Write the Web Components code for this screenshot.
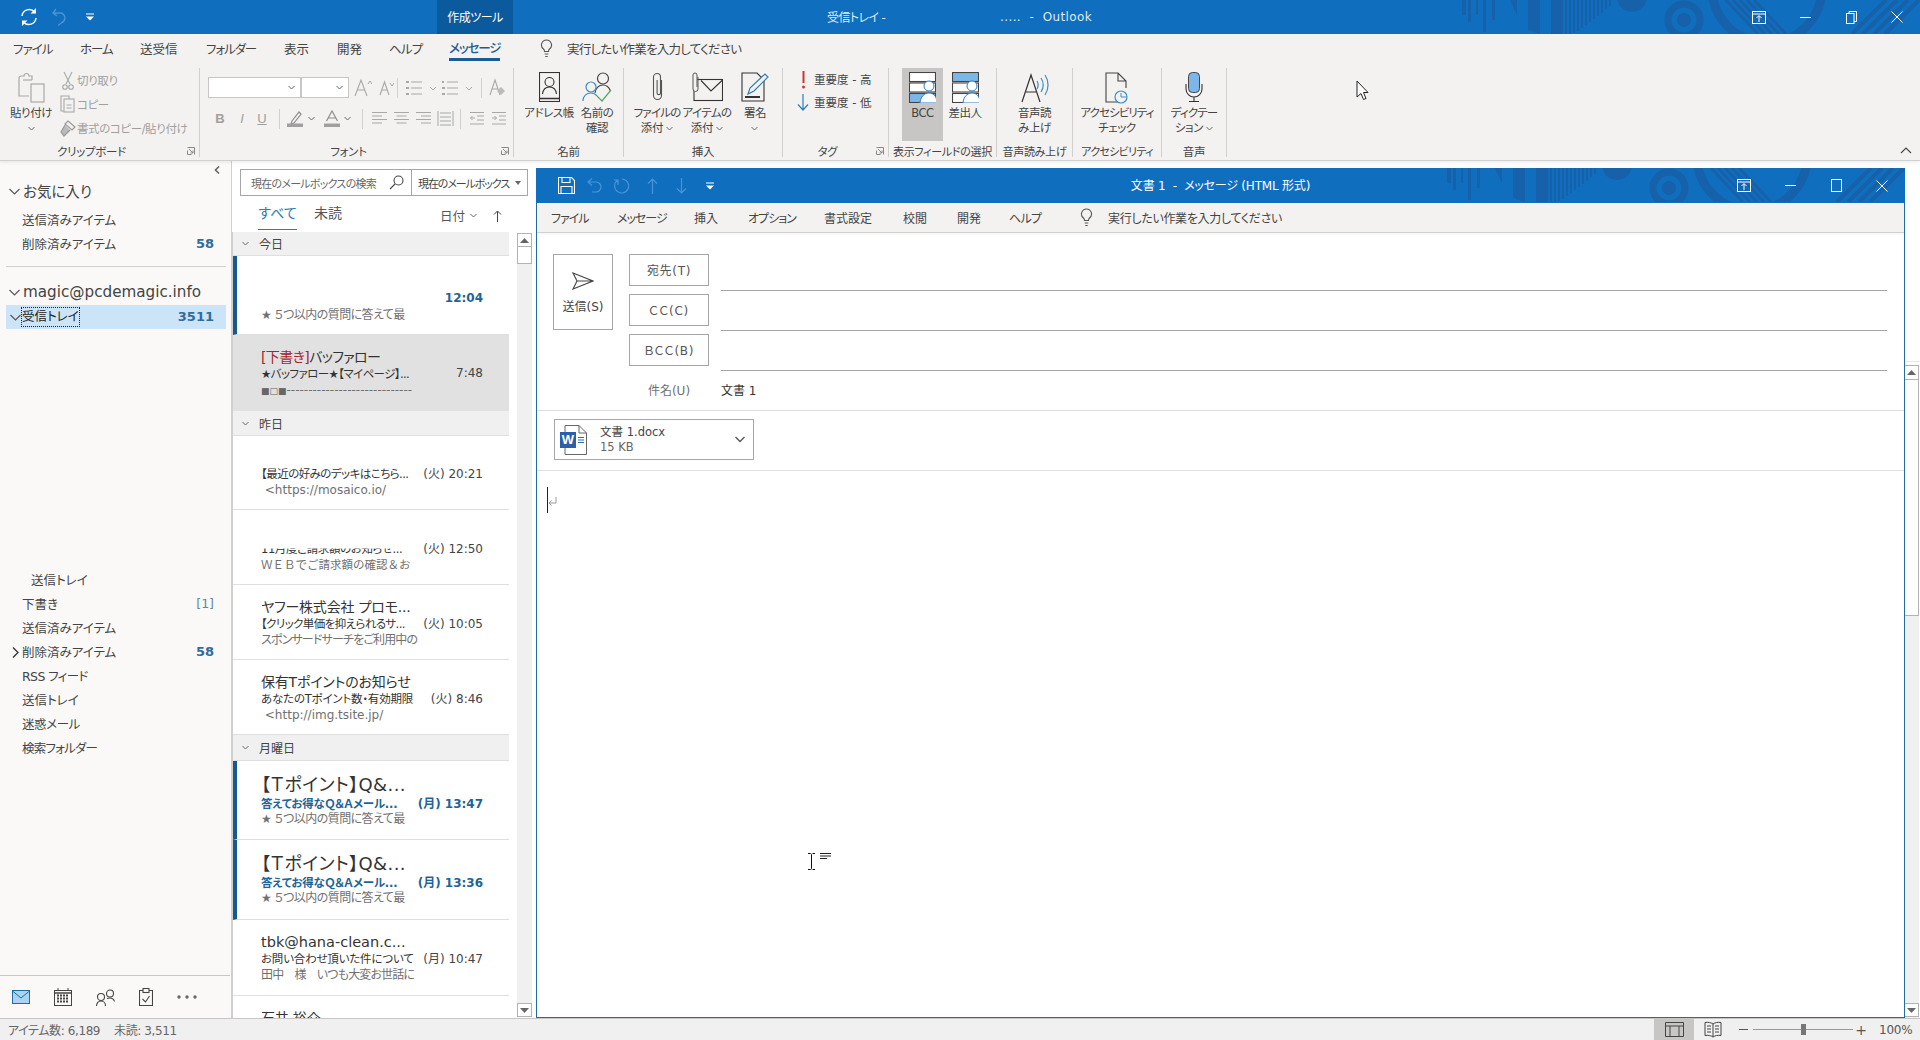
<!DOCTYPE html>
<html lang="ja"><head><meta charset="utf-8"><title>Outlook</title>
<style>
html,body{margin:0;padding:0;height:100%;overflow:hidden;background:#fff}
body{font-family:"DejaVu Sans","Noto Sans CJK JP",sans-serif;font-feature-settings:"palt";color:#444;font-size:12px}
</style></head><body>
<o-app>
 <o-titlebar>
  <o-ico n="refresh" slot="a"></o-ico><o-ico n="undo" slot="b"></o-ico><o-ico n="qdrop" slot="c"></o-ico>
 </o-titlebar>
 <o-tabs>
  <o-tab w="67" ls="-.9">ファイル</o-tab><o-tab w="60" ls="-1.1">ホーム</o-tab><o-tab w="66">送受信</o-tab><o-tab w="78" ls="-1.1">フォルダー</o-tab><o-tab w="53">表示</o-tab><o-tab w="52">開発</o-tab><o-tab w="60" ls="-.8">ヘルプ</o-tab><o-tab w="91" ls="-1.100" active>メッセージ</o-tab>
  <o-tab w="27"><o-ico n="bulb"></o-ico></o-tab><o-tab w="200" ls="-.75">実行したい作業を入力してください</o-tab>
 </o-tabs>
 <o-ribbon>
  <rb-group w="200" label="クリップボード" launcher>
   <rb-bar pl="10" align="start">
    <rb-btn w="42"><o-ico n="paste" slot="icon"></o-ico>貼り付け<br><o-ico n="chev"></o-ico></rb-btn>
    <rb-col ml="8">
     <rb-line off><o-ico n="scissors" style="width:16px;justify-content:center"></o-ico>切り取り</rb-line>
     <rb-line off><o-ico n="copy" style="width:16px;justify-content:flex-start"></o-ico>コピー</rb-line>
     <rb-line off><o-ico n="brush" style="width:16px;justify-content:flex-start;margin-left:-1px;margin-right:1px"></o-ico>書式のコピー/貼り付け</rb-line>
    </rb-col>
   </rb-bar>
  </rb-group>
  <rb-group w="314" label="フォント" launcher>
   <rb-col pl="8" pt="9" gap="10">
    <rb-bar>
     <rb-tool w="93" box><o-ico n="chev"></o-ico></rb-tool><rb-tool w="48" box><o-ico n="chev"></o-ico></rb-tool>
     <rb-tool w="24" ml="2"><o-ico n="agrow"></o-ico></rb-tool><rb-tool w="22"><o-ico n="ashrink"></o-ico></rb-tool><rb-tool w="1" sep></rb-tool>
     <rb-tool w="32" ml="6"><o-ico n="bullets"></o-ico></rb-tool><rb-tool w="31" ml="5"><o-ico n="numbers"></o-ico></rb-tool><rb-tool w="1" ml="9" sep></rb-tool>
     <rb-tool w="17" ml="7"><o-ico n="clear"></o-ico></rb-tool>
    </rb-bar>
    <rb-bar>
     <rb-tool w="24" b>B</rb-tool><rb-tool w="20" i>I</rb-tool><rb-tool w="20" u>U</rb-tool><rb-tool w="1" ml="7" sep></rb-tool>
     <rb-tool w="16" ml="7"><o-ico n="hilite"></o-ico></rb-tool><rb-tool w="16"><o-ico n="chev"></o-ico></rb-tool>
     <rb-tool w="17" ml="4"><o-ico n="fontcolor"></o-ico></rb-tool><rb-tool w="14"><o-ico n="chev"></o-ico></rb-tool><rb-tool w="1" ml="8" sep></rb-tool>
     <rb-tool w="17" ml="8"><o-ico n="al"></o-ico></rb-tool><rb-tool w="17" ml="5"><o-ico n="ac"></o-ico></rb-tool><rb-tool w="17" ml="5"><o-ico n="ar"></o-ico></rb-tool><rb-tool w="17" ml="5"><o-ico n="aj"></o-ico></rb-tool><rb-tool w="1" ml="6" sep></rb-tool>
     <rb-tool w="16" ml="8"><o-ico n="outdent"></o-ico></rb-tool><rb-tool w="16" ml="6"><o-ico n="indent"></o-ico></rb-tool>
    </rb-bar>
   </rb-col>
  </rb-group>
  <rb-group w="110" label="名前">
   <rb-bar pl="10" align="start">
    <rb-btn w="50"><o-ico n="addr" slot="icon"></o-ico>アドレス帳</rb-btn>
    <rb-btn w="44" ml="1"><o-ico n="names" slot="icon"></o-ico>名前の<br>確認</rb-btn>
   </rb-bar>
  </rb-group>
  <rb-group w="159" label="挿入">
   <rb-bar pl="8" align="start">
    <rb-btn w="50"><o-ico n="clip" slot="icon"></o-ico><span style="letter-spacing:-.8px">ファイルの</span><br>添付 <o-ico n="chev"></o-ico></rb-btn>
    <rb-btn w="50"><o-ico n="mailclip" slot="icon"></o-ico><span style="letter-spacing:-.6px">アイテムの</span><br>添付 <o-ico n="chev"></o-ico></rb-btn>
    <rb-btn w="46"><o-ico n="sign" slot="icon"></o-ico>署名<br><o-ico n="chev"></o-ico></rb-btn>
   </rb-bar>
  </rb-group>
  <rb-group w="106" label="タグ" launcher>
   <rb-col pl="14">
    <rb-line h="22"><o-ico n="high" style="width:12px;justify-content:center"></o-ico>重要度 - 高</rb-line>
    <rb-line h="23"><o-ico n="low"></o-ico>重要度 - 低</rb-line>
   </rb-col>
  </rb-group>
  <rb-group w="108" label="表示フィールドの選択" tight>
   <rb-bar pl="13" align="start">
    <rb-btn w="41" sel><o-ico n="bcc" slot="icon"></o-ico>BCC</rb-btn>
    <rb-btn w="44"><o-ico n="from" slot="icon"></o-ico>差出人</rb-btn>
   </rb-bar>
  </rb-group>
  <rb-group w="76" label="音声読み上げ" tight>
   <rb-bar align="start" center><rb-btn w="70"><o-ico n="read" slot="icon"></o-ico>音声読<br>み上げ</rb-btn></rb-bar>
  </rb-group>
  <rb-group w="89" label="アクセシビリティ" tight ls="-.7">
   <rb-bar align="start" center><rb-btn w="80"><o-ico n="access" slot="icon"></o-ico><span style="letter-spacing:-.95px">アクセシビリティ</span><br>チェック</rb-btn></rb-bar>
  </rb-group>
  <rb-group w="65" label="音声">
   <rb-bar align="start" center><rb-btn w="60"><o-ico n="mic" slot="icon"></o-ico><span style="letter-spacing:-.85px">ディクテー</span><br>ション <o-ico n="chev"></o-ico></rb-btn></rb-bar>
  </rb-group>
  <o-ico n="caret" slot="end"></o-ico>
 </o-ribbon>
 <o-main>
  <o-nav>
   <o-navhead big>お気に入り</o-navhead>
   <o-navitem mt="5">送信済みアイテム</o-navitem>
   <o-navitem count="58">削除済みアイテム</o-navitem>
   <o-navsep></o-navsep>
   <o-navhead mail>magic@pcdemagic.info</o-navhead>
   <o-navitem sel focus chev="down" count="3511">受信トレイ</o-navitem>
   <o-navitem mt="239" indent="9">送信トレイ</o-navitem>
   <o-navitem count="[1]" plain>下書き</o-navitem>
   <o-navitem>送信済みアイテム</o-navitem>
   <o-navitem chev="right" count="58">削除済みアイテム</o-navitem>
   <o-navitem ls="-.6">RSS フィード</o-navitem>
   <o-navitem>送信トレイ</o-navitem>
   <o-navitem ls="-.4">迷惑メール</o-navitem>
   <o-navitem ls="-.8">検索フォルダー</o-navitem>
   <o-ico n="nmail" slot="foot"></o-ico><o-ico n="ncal" slot="foot"></o-ico><o-ico n="npeople" slot="foot"></o-ico><o-ico n="ntask" slot="foot"></o-ico><o-ico n="ndots" slot="foot"></o-ico>
  </o-nav>
  <o-list>
   <o-sect h="24">今日</o-sect>
   <o-mail h="79" pad="18" unread><span slot="a">&nbsp;</span><span slot="b">&nbsp;</span><span slot="t">12:04</span><span slot="c">★ ５つ以内の質問に答えて最</span></o-mail>
   <o-mail h="76" pad="14" sel><span slot="a" style="letter-spacing:-.6px"><span style="color:#a4262c">[下書き]</span>バッファロー</span><span slot="b" style="letter-spacing:-.6px">★バッファロー★【マイページ】...</span><span slot="t">7:48</span><span slot="c" style="letter-spacing:0"><span style="font-size:9px;color:#666">■□■</span>-----------------------------</span></o-mail>
   <o-sect h="25">昨日</o-sect>
   <o-mail h="74" pad="13"><span slot="a">&nbsp;</span><span slot="b" style="letter-spacing:-.55px">【最近の好みのデッキはこちら...</span><span slot="t">(火) 20:21</span><span slot="c" style="letter-spacing:0">&nbsp;&lt;https://mosaico.io/</span></o-mail>
   <o-mail h="75" pad="14"><span slot="a">&nbsp;</span><span slot="b" style="clip-path:inset(7px 0 0 0);letter-spacing:-.4px">11月度ご請求額のお知らせ...</span><span slot="t">(火) 12:50</span><span slot="c" style="font-feature-settings:normal;font-size:11.5px;letter-spacing:0">ＷＥＢでご請求額の確認＆お</span></o-mail>
   <o-mail h="75" pad="14"><span slot="a">ヤフー株式会社 プロモ...</span><span slot="b" style="letter-spacing:-.6px">【クリック単価を抑えられるサ...</span><span slot="t">(火) 10:05</span><span slot="c" style="letter-spacing:-.85px">スポンサードサーチをご利用中の</span></o-mail>
   <o-mail h="75" pad="14"><span slot="a">保有Tポイントのお知らせ</span><span slot="b">あなたのTポイント数・有効期限</span><span slot="t">(火) 8:46</span><span slot="c" style="letter-spacing:0">&nbsp;&lt;http://img.tsite.jp/</span></o-mail>
   <o-sect h="26">月曜日</o-sect>
   <o-mail h="79" pad="14" unread big><span slot="a">【Ｔポイント】Q&amp;...</span><span slot="b">答えてお得なＱ＆Ａメール...</span><span slot="t">(月) 13:47</span><span slot="c">★ ５つ以内の質問に答えて最</span></o-mail>
   <o-mail h="80" pad="14" unread big><span slot="a">【Ｔポイント】Q&amp;...</span><span slot="b">答えてお得なＱ＆Ａメール...</span><span slot="t">(月) 13:36</span><span slot="c">★ ５つ以内の質問に答えて最</span></o-mail>
   <o-mail h="76" pad="14"><span slot="a" style="font-size:14.5px;letter-spacing:0">tbk@hana-clean.c...</span><span slot="b">お問い合わせ頂いた件について</span><span slot="t">(月) 10:47</span><span slot="c" style="letter-spacing:-.85px">田中　様　いつも大変お世話に</span></o-mail>
   <o-mail h="40" pad="14"><span slot="a">石井 裕介</span><span slot="b">&nbsp;</span><span slot="t"></span><span slot="c">&nbsp;</span></o-mail>
  </o-list>
  <o-compose></o-compose>
  <o-vscroll></o-vscroll>
 </o-main>
 <o-status></o-status>
</o-app>
<script>
const I={
refresh:[18,20,'<g fill="none" stroke="#fff" stroke-width="1.5"><path d="M2 9A7.2 7.2 0 0 1 14.6 5"/><path d="M16 11A7.2 7.2 0 0 1 3.4 15"/></g><path d="M16 1v5.5h-5.5z M2 19v-5.5h5.5z" fill="#fff"/>'],
undo:[15,18,'<path d="M4 1 1 5l4 3M1.500 5H8a5 5 0 0 1 2 9.500L6 17.500" fill="none" stroke="#4a94d6" stroke-width="1.400"/>'],
qdrop:[8,8,'<path d="M0 1h8" stroke="#fff"/><path d="M0 3.500h8L4 7.500z" fill="#fff"/>'],
bulb:[13,19,'<path d="M6.500 1a5 5 0 0 0-3 9c.7.6 1 1.400 1 2.500h4c0-1.100.3-1.900 1-2.500a5 5 0 0 0-3-9zM4.700 15h3.600M5.300 17.500h2.400" fill="none" stroke="#555" stroke-width="1.100"/>'],
chev:[7,5,'<path d="M.5 1 3.500 4 6.500 1" fill="none" stroke="#666" stroke-width="1"/>'],
paste:[27,31,'<g fill="none" stroke="#a8a8a8" stroke-width="1.200"><path d="M14 8V4h-3a2.500 2.500 0 0 0-5 0H3a2 2 0 0 0-2 2v18h10"/><path d="M5 8h9"/><rect x="13" y="12" width="13" height="18" fill="#f3f2f1"/></g>'],
scissors:[12,19,'<g fill="none" stroke="#a8a8a8" stroke-width="1.100"><path d="M2 1l6 12M10 1 4 13"/><circle cx="3" cy="16" r="2.300"/><circle cx="9" cy="16" r="2.300"/></g>'],
copy:[15,18,'<g fill="none" stroke="#a8a8a8" stroke-width="1.100"><path d="M5 16H1V1h8v3"/><rect x="4" y="4" width="10" height="13" fill="#f3f2f1"/><path d="M6.500 10h5M6.500 13h5"/></g>'],
brush:[17,17,'<g fill="none" stroke="#999" stroke-width="1.200"><path d="M9 1l7 6-3 3-7-6z"/><path d="M6 5 2 12l3 4 6-6" fill="#bbb"/></g>'],
agrow:[18,20,'<path d="M1 18 7 2l6 16M3.500 12h7" fill="none" stroke="#a8a8a8" stroke-width="1.100"/><path d="M14 6l2-3 2 3" fill="none" stroke="#a8a8a8"/>'],
ashrink:[15,16,'<path d="M1 15 5.500 2l4.500 13M3 10h5" fill="none" stroke="#a8a8a8" stroke-width="1.100"/><path d="M11 3l2 3 2-3" fill="none" stroke="#a8a8a8"/>'],
bullets:[31,16,'<g stroke="#a8a8a8"><path d="M1 2h3M1 8h3M1 14h3" stroke-width="2"/><path d="M6 2h11M6 8h11M6 14h11" stroke-width="1"/></g><path d="M25 7l3 3 3-3" fill="none" stroke="#a8a8a8"/>'],
numbers:[31,16,'<g stroke="#a8a8a8"><path d="M1 2h2M1 8h3M1 14h3" stroke-width="2"/><path d="M6 2h11M6 8h11M6 14h11" stroke-width="1"/></g><path d="M25 7l3 3 3-3" fill="none" stroke="#a8a8a8"/>'],
clear:[17,19,'<path d="M1 17 6 2l5 15M3 11h6" fill="none" stroke="#a8a8a8" stroke-width="1.100"/><path d="M12 9l4 4-4 4-4-4z" fill="#bbb"/>'],
hilite:[16,17,'<path d="M5 11l7-9 2 2-7 9-3 1z" fill="none" stroke="#8d8d8d" stroke-width="1.200"/><rect y="13.500" width="16" height="3.500" fill="#a0a0a0"/>'],
fontcolor:[16,17,'<path d="M2.500 11 8 1l5.500 10M4.500 8h7" fill="none" stroke="#8d8d8d" stroke-width="1.200"/><rect y="13.500" width="16" height="3.500" fill="#a0a0a0"/>'],
al:[17,15,'<path d="M1 1.500h15M1 5h10M1 8.500h15M1 12h10" stroke="#a8a8a8"/>'],
ac:[17,15,'<path d="M1 1.500h15M3.500 5h10M1 8.500h15M3.500 12h10" stroke="#a8a8a8"/>'],
ar:[17,15,'<path d="M1 1.500h15M6 5h10M1 8.500h15M6 12h10" stroke="#a8a8a8"/>'],
aj:[17,17,'<path d="M1 1v15M16 1v15M3 3h11M3 7h11M3 11h11M3 15h11" stroke="#a8a8a8" fill="none"/>'],
outdent:[16,15,'<path d="M1 1.500h14M8 5h7M8 9h7M1 13h14M6 7H1.500M3.500 5 1.500 7l2 2" stroke="#a8a8a8" fill="none"/>'],
indent:[16,15,'<path d="M1 1.500h14M8 5h7M8 9h7M1 13h14M1 7h4.500M3.500 5l2 2-2 2" stroke="#a8a8a8" fill="none"/>'],
addr:[21,30,'<g fill="none" stroke="#333" stroke-width="1.100"><rect x=".5" y=".5" width="20" height="29"/><circle cx="10.500" cy="10" r="4.500"/><path d="M3.500 22c.5-4.500 3.500-7 7-7s6.500 2.500 7 7"/></g><path d="M.5 26.500h20" stroke="#333" stroke-width="1.500"/>'],
names:[30,30,'<g fill="none" stroke-width="1.200"><g stroke="#444"><circle cx="21" cy="6.500" r="5.500"/><path d="M13 21c.5-5 4-8 8-8 3 0 6 2 7.500 6"/></g><g stroke="#3b8ec7"><circle cx="9" cy="15" r="5"/><path d="M1 29c0-5 3.500-8 8-8 2.500 0 4.500 1 6 3"/></g><path d="M15 24l5 5 9-11" stroke="#57a66a"/></g>'],
clip:[11,31,'<path d="M9.500 8v15.500a4 4 0 0 1-8 0V5a3.500 3.500 0 0 1 7 0v16a1.700 1.700 0 0 1-3.400 0V8" fill="none" stroke="#555" stroke-width="1.100"/>'],
mailclip:[32,31,'<g fill="none" stroke="#333" stroke-width="1.100"><rect x="3" y="7.500" width="28.500" height="21"/><path d="M10 8.500 20 19l11-10.500"/></g><path d="M7 5v12a2.500 2.500 0 0 1-5 0V3a2 2 0 0 1 4 0v12" fill="#f3f2f1" stroke="#555"/>'],
sign:[28,31,'<g fill="none"><path d="M1 1h15l7 7v21H1z" stroke="#333" stroke-width="1.100"/><path d="M4 25h15" stroke="#333" stroke-width="2"/><path d="M7 22l2-6L24 2l3 3-14 14z" fill="#f3f2f1" stroke="#2f7dbb" stroke-width="1.200"/></g>'],
high:[5,19,'<path d="M2.500 1v12" stroke="#d13438" stroke-width="2"/><circle cx="2.500" cy="17" r="1.500" fill="#d13438"/>'],
low:[12,18,'<path d="M6 1v16M1 11.500l5 5.500 5-5.500" fill="none" stroke="#2f7dbb" stroke-width="1.200"/>'],
bcc:[27,31,'<g stroke="#444" stroke-width="1.100"><rect x=".5" y=".5" width="26" height="9" fill="#fff"/><rect x=".5" y="11" width="26" height="9" fill="#fff"/><rect x=".5" y="21.500" width="26" height="9" fill="#7db7ea"/></g><circle cx="20" cy="14" r="5" fill="#fff" stroke="#2f7dbb"/><path d="M11 31c.5-6 4-10 9-10s8 4 8 10z" fill="#fff" stroke="#2f7dbb"/>'],
from:[27,31,'<g stroke="#444" stroke-width="1.100"><rect x=".5" y=".5" width="26" height="9" fill="#7db7ea"/><rect x=".5" y="11" width="26" height="9" fill="#fff"/><rect x=".5" y="21.500" width="26" height="9" fill="#fff"/></g><circle cx="20" cy="14" r="5" fill="#fff" stroke="#2f7dbb"/><path d="M11 31c.5-6 4-10 9-10s8 4 8 10z" fill="#fff" stroke="#2f7dbb"/>'],
read:[28,31,'<path d="M1 30 10 3l9 27M5 20h10" fill="none" stroke="#333" stroke-width="1.200"/><path d="M16 9a8 8 0 0 1 0 8M20 6a13 13 0 0 1 0 14M24 3a18 18 0 0 1 0 20" fill="none" stroke="#3b8ec7" stroke-width="1.200"/>'],
access:[27,32,'<path d="M16 30H2V1h12l8 8v7M14 1v8h8" fill="none" stroke="#444" stroke-width="1.100"/><circle cx="17" cy="25" r="6" fill="#f3f2f1" stroke="#3b8ec7" stroke-width="1.200"/><path d="M17 21v4h5" fill="none" stroke="#3b8ec7"/>'],
mic:[18,31,'<rect x="3.500" y=".5" width="11" height="20" rx="4" fill="#7db7ea" stroke="#444"/><path d="M1 12v5a8 8 0 0 0 16 0v-5M9 25v4M4 29.500h10" fill="none" stroke="#333" stroke-width="1.100"/>'],
caret:[12,7,'<path d="M1 6l5-5 5 5" fill="none" stroke="#444" stroke-width="1.100"/>'],
left:[6,8,'<path d="M5 .5 1.500 4 5 7.500" fill="none" stroke="#666" stroke-width="1.600"/>'],
navdown:[11,7,'<path d="M.5 1l5 5 5-5" fill="none" stroke="#555" stroke-width="1.100"/>'],
navright:[7,11,'<path d="M1 .5l5 5-5 5" fill="none" stroke="#333" stroke-width="1.300"/>'],
nmail:[18,14,'<rect x=".5" y=".5" width="17" height="13" fill="#a9d3f2" stroke="#1f6f9e"/><path d="M.5 1 9 8l8.500-7" fill="none" stroke="#1f6f9e"/>'],
ncal:[18,18,'<rect x=".5" y="2.500" width="17" height="15" fill="none" stroke="#444"/><path d="M.5 5h17" stroke="#444" stroke-width="1.500"/><path d="M3 7.500h12M3 10.500h12M3 13.500h12" stroke="#444" stroke-width="2" stroke-dasharray="2 1"/><path d="M4 0v3M14 0v3" stroke="#444"/>'],
npeople:[19,17,'<g fill="none" stroke="#444" stroke-width="1.100"><circle cx="14" cy="4.500" r="3.500"/><circle cx="5" cy="8" r="3.500"/><path d="M.5 17c0-3 2-5 4.500-5s4.500 2 4.500 5"/><path d="M11 9.500c3.500-1 6.500 0 7.500 3"/></g>'],
ntask:[14,18,'<g fill="none" stroke="#444" stroke-width="1.100"><path d="M4 2.500H.5v15h13v-15H10"/><rect x="4" y=".5" width="6" height="4"/><path d="M3.500 11l3 3 4-6"/></g>'],
ndots:[20,4,'<g fill="#666"><circle cx="2" cy="2" r="1.700"/><circle cx="10" cy="2" r="1.700"/><circle cx="18" cy="2" r="1.700"/></g>'],
search:[15,15,'<circle cx="9.500" cy="5.500" r="4.500" fill="none" stroke="#444" stroke-width="1.100"/><path d="M6 9 1 14" stroke="#444" stroke-width="1.100"/>'],
drop:[6,4,'<path d="M0 0h6L3 4z" fill="#666"/>'],
up:[9,12,'<path d="M4.500 12V1M1 4.500 4.500 1 8 4.500" fill="none" stroke="#444" stroke-width="1"/>'],
sbup:[9,5,'<path d="M0 5 4.500 0 9 5z" fill="#666"/>'],
sbdown:[9,5,'<path d="M0 0h9L4.500 5z" fill="#666"/>'],
win_ribbon:[14,13,'<rect x=".5" y=".5" width="13" height="12" fill="none" stroke="#fff"/><path d="M.5 3h13" stroke="#fff" stroke-width="1"/><path d="M7 11V5M4.500 7 7 4.500 9.500 7" fill="none" stroke="#fff"/>'],
win_min:[11,1,'<path d="M0 .5h11" stroke="#fff"/>'],
win_max:[11,13,'<rect x=".5" y=".5" width="10" height="12" fill="none" stroke="#fff"/>'],
win_res:[11,13,'<rect x=".5" y="2.500" width="7.500" height="10" fill="none" stroke="#fff"/><path d="M3 2.500V.5h7.500v10H8" fill="none" stroke="#fff"/>'],
win_close:[12,12,'<path d="M.5.5l11 11M11.500.5l-11 11" stroke="#fff" stroke-width="1"/>'],
save:[17,17,'<g fill="none" stroke="#fff" stroke-width="1.100"><path d="M.5.5h13l3 3v13H.5z"/><path d="M4 .5v5h8v-5M3 16.500v-7h11v7"/></g>'],
cundo:[15,15,'<path d="M5 .5 1 4l4 3.500M1.500 4H9a5 5 0 0 1 0 10H5" fill="none" stroke="#4a94d6" stroke-width="1.200"/>'],
credo:[16,16,'<path d="M4 2a7 7 0 1 0 4-1M4 7V2H0" fill="none" stroke="#4a94d6" stroke-width="1.200"/>'],
cup:[11,16,'<path d="M5.500 16V1M1 5.500 5.500 1 10 5.500" fill="none" stroke="#4a94d6" stroke-width="1.200"/>'],
cdown:[11,16,'<path d="M5.500 0v15M1 10.500 5.500 15l4.500-4.500" fill="none" stroke="#4a94d6" stroke-width="1.200"/>'],
send:[22,18,'<path d="M1 1 21 9 1 17l4-8zM5 9h16" fill="none" stroke="#444" stroke-width="1.100"/>'],
word:[27,30,'<path d="M5 .5h14l7.500 7.500v21.500H5z" fill="#fff" stroke="#666"/><path d="M19 .5v7.500h7.500" fill="none" stroke="#666"/><path d="M18 12.500h6M18 15h6M18 17.500h6" stroke="#2b6cb5"/><rect y="7" width="16" height="16" fill="#2b5fa8"/>'],
cchev:[10,7,'<path d="M.5 1l4.500 4.500L9.500 1" fill="none" stroke="#555" stroke-width="1.300"/>'],
ret:[9,9,'<path d="M8 0v6H1M3.500 3.500 1 6l2.500 2.500" fill="none" stroke="#999"/>'],
ibeam:[9,17,'<path d="M1 .5h2.500c.6 0 1 .5 1 1v14c0 .5-.4 1-1 1H1M8 .5H5.500M8 16.500H5.500" fill="none" stroke="#111"/>'],
lines:[11,7,'<path d="M0 .5h11M0 3h11M0 5.500h7" stroke="#222"/>'],
pointer:[13,21,'<path d="M1 1v16l4-3.500 2.500 6 2.500-1-2.500-6H12z" fill="#fff" stroke="#222"/>'],
vnormal:[19,15,'<path d="M.5.5h18v14H.5zM.5 4h18M5 4v10.500M14 4v10.500" fill="none" stroke="#444"/>'],
vread:[18,17,'<path d="M9 3C7 1.500 4 1 1 1.500v13C4 14 7 14.500 9 16c2-1.500 5-2 8-1.500v-13C14 1 11 1.500 9 3zM9 3v13M3 5h4M3 8h4M3 11h4M11 5h4M11 8h4M11 11h4" fill="none" stroke="#444"/>']
};
function def(name,css,html,hook){
 customElements.define(name,class extends HTMLElement{
  constructor(){super();this.attachShadow({mode:'open'});}
  connectedCallback(){
   const a=k=>this.getAttribute(k);
   this.shadowRoot.innerHTML='<style>'+(typeof css==='function'?css(a,this):css)+'</style>'+(typeof html==='function'?html(a,this):html);
   if(hook)hook.call(this,a);
  }
 });
}
def('o-ico',':host{display:inline-flex;vertical-align:middle;flex:none}svg{display:block;flex:none}',a=>{const d=I[a('n')];return `<svg xmlns="http://www.w3.org/2000/svg" width="${d[0]}" height="${d[1]}" viewBox="0 0 ${d[0]} ${d[1]}">${d[2]}</svg>`;});
const wm=(()=>{let s='';[[62,4,15],[68,3,22],[76,2,15],[83,3,32],[92,3,20],[151,12,34]].forEach(r=>s+=`<rect x="${r[0]}" width="${r[1]}" height="${r[2]}"/>`);
 [34,34,33,31,28,25,22,19,16,13,9,6].forEach((h,i)=>s+=`<rect x="${165+i*4}" width="2" height="${h}"/>`);
 s+='<polygon points="110,0 117,0 117,15"/><polygon points="128,0 140,0 140,34 128,30"/><circle cx="232" cy="-3" r="15"/><circle cx="284" cy="20" r="7"/>';
 s+='<g fill="none" stroke="#1661a9"><circle cx="284" cy="20" r="16" stroke-width="7"/><circle cx="367" cy="-12" r="55" stroke-width="9"/>';
 [0,1,2,3,4].forEach(i=>s+=`<path d="M${326+i*7} 0l32 34" stroke-width="3"/>`);
 [0,1,2,3].forEach(i=>s+=`<path d="M${452+i*11} 34l34-34" stroke-width="4"/>`);
 return s+'</g>';})();
def('o-deco',':host{position:absolute;top:0;right:0;width:520px;height:34px;overflow:hidden;pointer-events:none}svg{display:block}',`<svg width="520" height="35" viewBox="0 0 520 35" fill="#1661a9">${wm}</svg>`);
def('o-app',':host{display:flex;flex-direction:column;width:1920px;height:1040px;position:relative;overflow:hidden}o-ico{position:absolute;left:1356px;top:80px;z-index:5}','<slot></slot><o-ico n="pointer"></o-ico>');
def('o-titlebar',':host{display:grid;grid-template-columns:437px 76px 314px 173px 1fr auto;height:34px;background:#106ebe;color:#fff;position:relative;align-items:center;font-size:12px;flex:none}.q{display:flex;align-items:center;padding-left:20px}.t{background:#0c5a9e;height:34px;display:flex;align-items:center;justify-content:center;position:relative;letter-spacing:-.5px;padding-bottom:1px;box-sizing:border-box}.w{display:flex;position:relative;grid-column:6}.w span{width:46px;display:flex;justify-content:center;align-items:center;height:34px}.u{position:relative;color:#dfeaf5;white-space:nowrap;padding-bottom:1px}',
 ()=>`<o-deco></o-deco><div class="q"><slot name="a"></slot><span style="width:14px"></span><slot name="b"></slot><span style="width:19px"></span><slot name="c"></slot></div><div class="t">作成ツール</div><div></div><div class="u" style="letter-spacing:-.6px">受信トレイ -</div><div class="u" style="letter-spacing:.4px">..... &nbsp;-&nbsp; Outlook</div><div class="w"><span><o-ico n="win_ribbon"></o-ico></span><span><o-ico n="win_min"></o-ico></span><span><o-ico n="win_res"></o-ico></span><span><o-ico n="win_close"></o-ico></span></div>`);
def('o-tabs',':host{display:flex;height:34px;flex:none;background:#f3f2f1;padding-left:13px;align-items:flex-start;font-size:12.5px;color:#444}','<slot></slot>');
def('o-tab',(a)=>`:host{display:flex;align-items:center;flex:none;width:${a('w')}px;white-space:nowrap;height:${a('active')!==null?30:28}px;letter-spacing:${a('ls')||0}px}${a('active')!==null?'span{color:#1a5c92;font-weight:500;border-bottom:3px solid #1a5c92;padding-bottom:1px;margin-top:3px;display:block;line-height:17px}':''}`,'<span><slot></slot></span>');
def('o-ribbon',':host{display:flex;height:93px;box-sizing:border-box;background:#f3f2f1;border-bottom:1px solid #d2d0ce;position:relative;flex:none;box-shadow:0 2px 3px rgba(0,0,0,.06);z-index:1}.e{position:absolute;right:8px;bottom:3px}','<slot></slot><div class="e"><slot name="end"></slot></div>');
def('rb-group',a=>`:host{display:flex;flex-direction:column;width:${a('w')}px;height:89px;box-sizing:border-box;border-right:1px solid #d2d0ce;flex:none}.b{height:76px;flex:none}.l{display:flex;height:13px;align-items:center;color:#444;font-size:${a('tight')!==null?'11':'11.5'}px;white-space:nowrap;letter-spacing:${a('ls')||'-.3'}px}.l span{flex:1;text-align:center}.l i{width:16px;display:flex;justify-content:center}`,
 a=>`<div class="b"><slot></slot></div><div class="l"><span>${a('label')}</span>${a('launcher')!==null?'<i><svg width="8" height="8" viewBox="0 0 8 8"><path d="M.5 3.500v4h4M.5.5h7v7M2 2l4 4M6 3.500V6H3.500" fill="none" stroke="#888"/></svg></i>':''}</div>`);
def('rb-bar',a=>`:host{display:flex;align-items:${a('align')||'center'};height:${a('align')?'75px':'21px'};padding-left:${a('pl')||0}px;${a('center')!==null?'justify-content:center':''}}`,'<slot></slot>');
def('rb-col',a=>`:host{display:flex;flex-direction:column;margin-left:${a('ml')||0}px;padding-left:${a('pl')||0}px;padding-top:${a('pt')||0}px;gap:${a('gap')||0}px}`,'<slot></slot>');
def('rb-btn',a=>`:host{display:flex;flex-direction:column;align-items:center;width:${a('w')}px;margin-left:${a('ml')||0}px;flex:none;height:${a('sel')!==null?'73':'75'}px;box-sizing:border-box;${a('sel')!==null?'background:#c8c6c4;':''}color:#444;font-size:11.5px;text-align:center}.i{height:33px;padding-top:4px;display:flex;align-items:flex-start;justify-content:center;flex:none}.t{line-height:15px;white-space:nowrap;margin-top:1px;letter-spacing:-.45px}`,'<div class="i"><slot name="icon"></slot></div><div class="t"><slot></slot></div>');
def('rb-line',a=>`:host{display:flex;align-items:center;gap:${a('off')!==null?1:5}px;height:${a('h')||24}px;white-space:nowrap;font-size:11.5px;letter-spacing:${a('off')!==null?'-.4px':'0'};color:${a('off')!==null?'#a19f9d':'#444'}}`,'<slot></slot>');
def('rb-tool',a=>{const sep=a('sep')!==null,box=a('box')!==null;return `:host{display:flex;align-items:center;justify-content:${box?'flex-end':'center'};flex:none;box-sizing:border-box;width:${a('w')}px;margin-left:${a('ml')||0}px;height:21px;color:#a19f9d;font-family:"Liberation Sans",sans-serif;font-size:13px;${sep?'background:#d2d0ce;height:20px;':''}${box?'background:#fff;border:1px solid #c8c6c4;padding-right:5px;':''}${a('b')!==null?'font-weight:700;':''}${a('i')!==null?'font-style:italic;':''}${a('u')!==null?'text-decoration:underline;':''}}`},'<slot></slot>');
def('o-main',':host{display:flex;flex:1;min-height:0;background:#fff}','<slot></slot>');
def('o-nav',':host{display:flex;flex-direction:column;width:231px;flex:none;background:#faf9f8;border-right:1px solid #d2d0ce;height:857px;box-sizing:content-box;overflow:hidden}.c{height:18px;display:flex;justify-content:flex-end;align-items:center;padding-right:11px;flex:none}.s{flex:1}.f{height:43px;border-top:1px solid #c8c6c4;box-sizing:border-box;display:flex;align-items:center;flex:none;padding:0 0 0 12px;gap:24px;margin-right:1px}',
 '<div class="c"><o-ico n="left"></o-ico></div><slot></slot><div class="s"></div><div class="f"><slot name="foot"></slot></div>');
def('o-navhead',a=>`:host{display:flex;align-items:center;height:24px;flex:none;padding-left:9px;gap:2px;margin-top:${a('mail')!==null?13:0}px;color:#444;font-size:${a('mail')!==null?'15.2px':'14.5px'};white-space:nowrap}`,a=>`<o-ico n="navdown"></o-ico><span style="margin-left:1px;padding-bottom:${a('mail')!==null?0:2}px"><slot></slot></span>`);
def('o-navsep',':host{display:block;height:1px;background:#d2d0ce;margin:10px 5px 0 6px;flex:none}','');
def('o-navitem',a=>`:host{display:flex;align-items:center;height:24px;flex:none;margin:${a('mt')||0}px 5px 0 6px;padding-right:12px;box-sizing:border-box;${a('sel')!==null?'background:#cce4f7;margin-top:1px;':''}font-size:12.5px;color:#444;white-space:nowrap}.c{width:16px;flex:none;display:flex;justify-content:center;padding-left:3px;box-sizing:border-box}.t{${a('focus')!==null?'outline:1px dotted #222;color:#222;line-height:18px;':'padding-bottom:2px;'}margin-left:${a('indent')||0}px;letter-spacing:${a('ls')||0}px}.n{margin-left:auto;font-size:${a('plain')!==null?12.5:13}px;font-weight:${a('plain')!==null?400:700};color:${a('plain')!==null?'#5b8aa8':'#2f6c9e'};padding-bottom:1px}`,
 a=>`<span class="c">${a('chev')==='down'?'<o-ico n="navdown"></o-ico>':a('chev')==='right'?'<o-ico n="navright"></o-ico>':''}</span><span class="t"><slot></slot></span>${a('count')?`<span class="n">${a('count')}</span>`:''}`);
def('o-list',':host{display:flex;flex-direction:column;width:304px;flex:none;height:857px;overflow:hidden;background:#fff}.sr{display:flex;margin:8px 0 0 8px;width:288px;height:27px;box-sizing:border-box;border:1px solid #a6a6a6;flex:none;font-size:11px;color:#666;white-space:nowrap}.a{width:171px;box-sizing:border-box;border-right:1px solid #a6a6a6;display:flex;align-items:center;padding:0 7px 0 10px;justify-content:space-between;letter-spacing:-.75px}.b{flex:1;display:flex;align-items:center;padding:0 6px;justify-content:space-between;color:#444;letter-spacing:-1.1px}.tb{display:flex;height:36px;flex:none;align-items:flex-start;padding-left:26px;font-size:14px;color:#555;box-sizing:border-box}.tb span{height:34px;line-height:34px;box-sizing:border-box}.on{color:#2a7db5;border-bottom:1px solid #2a7db5;width:39px;text-align:center}.un{margin-left:17px}.d{margin-left:auto;font-size:12.5px;display:flex;align-items:center;gap:5px;height:34px;padding-top:2px}.u{margin:0 34px 0 16px;display:flex;height:34px;align-items:center;padding-top:3px}.row{display:flex;flex:1;min-height:0}.l{width:276px;overflow:hidden;height:786px;flex:none;border-left:1px solid #d2d0ce}.sb{width:15px;margin-left:8px;background:#f0f0f0;display:flex;flex-direction:column;height:784px;margin-top:1px;flex:none}.bt{height:14px;background:#fff;border:1px solid #b3b3b3;box-sizing:border-box;display:flex;align-items:center;justify-content:center;flex:none}.th{height:17px;background:#fff;border:1px solid #b3b3b3;border-top:0;box-sizing:border-box;flex:none}.sp{flex:1}',
 `<div class="sr"><div class="a">現在のメールボックスの検索<o-ico n="search"></o-ico></div><div class="b">現在のメールボックス<o-ico n="drop"></o-ico></div></div>
 <div class="tb"><span class="on">すべて</span><span class="un">未読</span><div class="d">日付 <o-ico n="chev"></o-ico></div><div class="u"><o-ico n="up"></o-ico></div></div>
 <div class="row"><div class="l"><slot></slot></div><div class="sb"><div class="bt"><o-ico n="sbup"></o-ico></div><div class="th"></div><div class="sp"></div><div class="bt"><o-ico n="sbdown"></o-ico></div></div></div>`);
def('o-sect',a=>`:host{display:flex;align-items:center;height:${a('h')}px;box-sizing:border-box;background:#f0f0f0;border-bottom:1px solid #e1dfdd;padding-left:9px;font-size:12px;color:#444;gap:10px}`,'<o-ico n="chev"></o-ico><slot></slot>');
def('o-mail',a=>{const big=a('big')!==null,un=a('unread')!==null;return `:host{display:block;height:${a('h')}px;box-sizing:border-box;padding:${a('pad')}px 26px 0 ${un?24:28}px;${un?'border-left:4px solid #155a8d;':''}${a('sel')!==null?'background:#e1e1e1;':'border-bottom:1px solid #e1dfdd;'}overflow:hidden;white-space:nowrap}.a{font-size:${big?'18px':'14px'};height:${big?19:16}px;line-height:${big?19:16}px;color:#333;overflow:hidden;letter-spacing:${big?'.4px':'-.2px'}}.m{display:flex;height:${big?17:15}px;align-items:center;font-size:11.5px;color:${un&&big?'#1f6496':'#333'};${un&&big?'font-weight:700;':''}letter-spacing:-.2px}.b{flex:1;overflow:hidden}.t{font-size:12px;letter-spacing:0;color:${un?'#1f6496':'#444'};${un?'font-weight:700;':''}flex:none}.c{height:18px;line-height:${big?'17px':'20px'};font-size:12px;color:#707070;letter-spacing:-.55px}`},
 '<div class="a"><slot name="a"></slot></div><div class="m"><div class="b"><slot name="b"></slot></div><div class="t"><slot name="t"></slot></div></div><div class="c"><slot name="c"></slot></div>');
def('o-compose',':host{display:flex;flex-direction:column;width:1369px;height:850px;margin-top:7px;box-sizing:border-box;border:1px solid #1f6f9e;border-top:0;flex:none;background:#fff;position:relative;font-size:12px;color:#444}.tt{display:grid;grid-template-columns:1fr auto 1fr;height:35px;background:#106ebe;color:#fff;align-items:center;margin:0 -1px;position:relative;flex:none}.q{display:flex;align-items:center;padding-left:22px;gap:12px;position:relative}.n{position:relative;white-space:nowrap;font-size:12px;letter-spacing:-.2px;padding-bottom:2px}.w{display:flex;justify-content:flex-end;position:relative}.w span{width:46px;height:35px;display:flex;justify-content:center;align-items:center}.mn{display:flex;height:30px;background:#f3f2f1;align-items:center;padding-left:14px;flex:none;font-size:12px;box-sizing:border-box;border-bottom:1px solid #d2d0ce;white-space:nowrap;box-shadow:0 1px 2px rgba(0,0,0,.05)}.mn span{display:flex;flex:none;align-items:center;padding-bottom:1px}.hd{display:flex;flex:none;padding-left:16px;padding-top:18px;height:178px;box-sizing:border-box;border-bottom:1px solid #e1dfdd}.snd{width:60px;height:76px;margin-top:3px;box-sizing:border-box;border:1px solid #a6a6a6;display:flex;flex-direction:column;align-items:center;padding-top:17px;gap:7px;flex:none;margin-right:16px;white-space:nowrap}.rows{flex:1;display:flex;flex-direction:column}.r{display:flex;height:40px;padding-top:3px;box-sizing:border-box}.ab{width:80px;height:32px;box-sizing:border-box;border:1px solid #a6a6a6;display:flex;align-items:center;justify-content:center;flex:none;color:#555;letter-spacing:.7px;padding-bottom:2px}.f{flex:1;margin-left:12px;margin-right:17px;border-bottom:1px solid #a6a6a6;height:36px}.sj{display:flex;height:38px;align-items:center;padding-bottom:2px;box-sizing:border-box}.sl{width:80px;text-align:center;color:#707070}.sv{margin-left:12px;color:#333}.at{height:60px;flex:none;padding:8px 0 0 17px;box-sizing:border-box;border-bottom:1px solid #e1dfdd}.bx{width:200px;height:41px;box-sizing:border-box;border:1px solid #a6a6a6;display:flex;align-items:center;padding:0 8px 0 5px;background:#fff}.wd{position:relative;flex:none}.wd b{position:absolute;left:0;top:7px;width:16px;height:16px;color:#fff;font:700 13px/16px "Liberation Sans",sans-serif;text-align:center}.nm{margin-left:13px;line-height:15px;flex:1;font-size:11.5px;white-space:nowrap;padding-top:1px}.nm small{color:#666;font-size:11.5px;display:block}.bd{flex:1;position:relative;padding:16px 0 0 10px}.cr{width:1px;height:26px;background:#222;position:relative}.cr o-ico{position:absolute;left:1px;top:10px}.ib{position:absolute;left:270px;top:382px;display:flex;align-items:flex-start;gap:4px}',
 `<div class="tt"><o-deco></o-deco><div class="q"><o-ico n="save"></o-ico><o-ico n="cundo"></o-ico><o-ico n="credo"></o-ico><o-ico n="cup" style="margin-left:5px"></o-ico><o-ico n="cdown" style="margin-left:6px"></o-ico><o-ico n="qdrop" style="margin-left:7px"></o-ico></div><div class="n">文書 1 &nbsp;-&nbsp; メッセージ (HTML 形式)</div><div class="w"><span><o-ico n="win_ribbon"></o-ico></span><span><o-ico n="win_min"></o-ico></span><span><o-ico n="win_max"></o-ico></span><span><o-ico n="win_close"></o-ico></span></div></div>
 <div class="mn"><span style="width:66px;letter-spacing:-1px">ファイル</span><span style="width:77px;letter-spacing:-1px">メッセージ</span><span style="width:54px">挿入</span><span style="width:76px;letter-spacing:-1px">オプション</span><span style="width:79px">書式設定</span><span style="width:54px">校閲</span><span style="width:52px">開発</span><span style="width:71px;letter-spacing:-.7px">ヘルプ</span><span style="width:28px"><o-ico n="bulb"></o-ico></span><span style="letter-spacing:-.3px">実行したい作業を入力してください</span></div>
 <div class="hd"><div class="snd"><o-ico n="send"></o-ico><span>送信(S)</span></div><div class="rows"><div class="r"><div class="ab">宛先(T)</div><div class="f"></div></div><div class="r"><div class="ab">ＣＣ(C)</div><div class="f"></div></div><div class="r"><div class="ab">ＢＣＣ(B)</div><div class="f"></div></div><div class="sj"><div class="sl">件名(U)</div><div class="sv">文書 1</div></div></div></div>
 <div class="at"><div class="bx"><div class="wd"><o-ico n="word"></o-ico><b>W</b></div><div class="nm">文書 1.docx<small>15 KB</small></div><o-ico n="cchev"></o-ico></div></div>
 <div class="bd"><div class="cr"><o-ico n="ret"></o-ico></div><div class="ib"><o-ico n="ibeam"></o-ico><o-ico n="lines"></o-ico></div></div>`);
def('o-vscroll',':host{display:flex;flex-direction:column;width:15px;flex:none;height:857px;background:#fff}.t{height:200px;border-bottom:1px solid #e8e8e8;box-sizing:content-box;flex:none}.b{width:14px;height:15px;margin-top:3px;background:#fff;border:1px solid #b3b3b3;border-left:0;box-sizing:border-box;display:flex;align-items:center;justify-content:center;flex:none}.th{width:13px;height:235px;border-right:1px solid #b3b3b3;border-bottom:1px solid #b3b3b3;flex:none;box-sizing:content-box}.tr{flex:1;background:#f0f0f0;width:14px;position:relative}.d{position:absolute;left:0;right:0;bottom:1px;height:14px;background:#fff;border:1px solid #b3b3b3;border-left:0;box-sizing:border-box;display:flex;align-items:center;justify-content:center}',
 '<div class="t"></div><div class="b"><o-ico n="sbup"></o-ico></div><div class="th"></div><div class="tr"><div class="d"><o-ico n="sbdown"></o-ico></div></div>');
def('o-status',':host{display:flex;align-items:center;height:22px;flex:none;background:#f0f0f0;border-top:1px solid #c8c6c4;box-sizing:border-box;font-size:12px;color:#666;padding-left:8px;white-space:nowrap;letter-spacing:-.4px}.u{margin-left:14px}.v{margin-left:auto;display:flex;align-items:center;height:21px;letter-spacing:0}.s{width:40px;height:21px;background:#c8c6c4;display:flex;align-items:center;justify-content:center}.n{width:38px;display:flex;justify-content:center}.m{width:9px;height:1px;background:#555;margin-left:7px}.tr{width:100px;height:1px;background:#999;margin:0 2px 0 5px;position:relative}.tr i{position:absolute;left:48px;top:-5px;width:5px;height:11px;background:#777}.p{font-size:14px;color:#555;width:12px;text-align:center;line-height:14px}.z{margin:0 9px 0 12px;font-size:12px;color:#555;width:32px;text-align:right;letter-spacing:-.2px}',
 '<span>アイテム数: 6,189</span><span class="u">未読: 3,511</span><div class="v"><div class="s"><o-ico n="vnormal"></o-ico></div><div class="n"><o-ico n="vread"></o-ico></div><div class="m"></div><div class="tr"><i></i></div><div class="p">+</div><div class="z">100%</div></div>');
</script>
</body></html>
